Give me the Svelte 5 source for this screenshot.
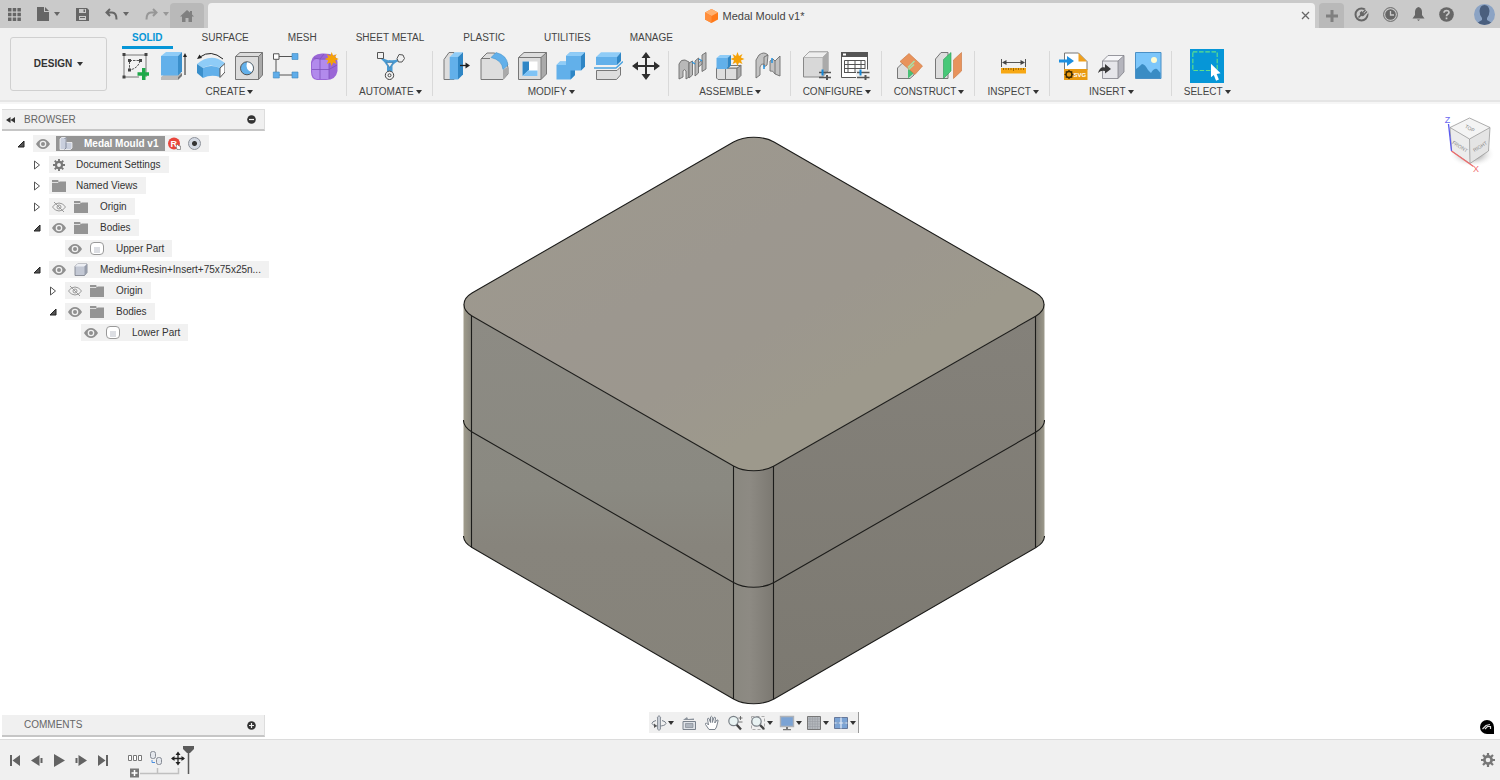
<script lang="ts">
  interface Tool {
    icon: string;
    label: string;
  }

  interface Group {
    name: string;
    tools: Tool[];
  }

  interface Node {
    label: string;
    depth: number;
    icon: string;
    open?: boolean;
    eye?: "on" | "off";
  }

  const star =
    "M0 -7L1.5 -3L5 -5L3.4 -1.6L7 0L3.4 1.6L5 5L1.5 3.4L0 7L-1.5 3.4L-5 5L-3.4 1.6L-7 0L-3.4 -1.6L-5 -5L-1.5 -3Z";

  // ribbon icons, drawn in a 30x30 box
  const art: Record<string, string> = {
    sketch: `<path d="M5 4H27V26M5 4V26H20" fill="none" stroke="#777" stroke-width="1"/><path d="M10.500 9.500H21C20 15 16 18 10.500 19Z" fill="none" stroke="#555" stroke-dasharray="2.500 1"/><g fill="#444"><path d="M3.500 2h3v3h-3zM25.500 2h3v3h-3zM3.500 24.500h3v3h-3zM9 8h3v3H9zM20 8h3v3h-3zM9 17.500h3v3H9z"/></g><path d="M23 17h3.500v4.200H31v3.500h-4.500V29H23v-4.300h-4.500v-3.500H23z" fill="#1fa84a"/>`,
    extrude: `<path d="M4 26L9 22H25L21 26V29H4Z" fill="#bbb"/><path d="M21 26L25 22V25L21 29Z" fill="#777"/><path d="M4 5L9 1H25L21 5Z" fill="#8fccf7"/><path d="M4 5H21V24.500H4Z" fill="#62b0ea"/><path d="M21 5L25 1V20.500L21 24.500Z" fill="#3a8fcb"/><path d="M28 24V4" stroke="#222"/><path d="M26 6L28 2L30 6Z" fill="#222"/>`,
    bend: `<path d="M2 13Q16 1 30 12L25 17Q15 12 8 17Z" fill="#8fccf7"/><path d="M2 13L8 17V27L2 22Z" fill="#3a8fcb"/><path d="M8 17Q16 13 25 17V26Q16 23 8 27Z" fill="#62b0ea"/><path d="M25 17L30 12.500V21L25 26.500Z" fill="#fff" stroke="#555"/><path d="M28 8Q16 -2 5 6" fill="none" stroke="#222"/><path d="M2 8L4.500 3.500L7 7Z" fill="#222"/>`,
    hole: `<path d="M2.500 5.500L7 1.500H29.500V24L25.500 28.500H2.500Z" fill="#dcdcdc"/><path d="M25.500 5.500L29.500 1.500V24L25.500 28.500Z" fill="#aaa"/><path d="M2.500 5.500L7 1.500H29.500V24L25.500 28.500H2.500ZM2.500 5.500H25.500V28.500M25.500 5.500L29.500 1.500" fill="none" stroke="#777"/><circle cx="14" cy="17.300" r="6.500" fill="#62b0ea" stroke="#555"/><path d="M14 11.300A6 6 0 0 1 20 17.300A6 6 0 0 1 18.500 21Q12 19 14 11.300Z" fill="#fff"/>`,
    pattern: `<path d="M8 5.500H21M5 8V21M8 24H21" stroke="#555"/><path d="M2.500 2.800h5.500v5.500H2.500z" fill="#fff" stroke="#555"/><path d="M21 2.500h6v6h-6zM2.300 21h6v6h-6zM21 21h6v6h-6z" fill="#5fadea" stroke="#3c86bd" stroke-width=".6"/>`,
    form: `<path d="M2 11Q3 3 13 2.500Q28 2 28.500 11V20Q27 29 17 29H8Q2 28 2 21Z" fill="#9a66d6"/><path d="M3 12Q5 7 12 8H20V28H8Q3 27 3 20Z" fill="#b28aec"/><path d="M11 8V28M20 8V28M3 18.500H20L28 14M5 7Q12 9 20 8L26 4M11 8L15 3" fill="none" stroke="#7d50bb" stroke-width=".8"/><g transform="translate(22.700 8)"><path d="${star}" fill="#f5a208"/></g>`,
    automate: `<path d="M7 6Q11 10 14.500 9Q19 10 23 8L24 10Q19 12 17.500 15V21H12V15Q10 11 6 8Z" fill="#4a9ad2"/><path d="M11.500 11.500H18L14.700 16.500Z" fill="#f1f1f1" stroke="#2f6f9e" stroke-width=".6"/><path d="M2.500 1.500h6v6h-6z" fill="#f1f1f1" stroke="#555"/><path d="M22 7.500L24 3.500L28 4L29.500 7.500L27 11H23.500Z" fill="#f1f1f1" stroke="#555"/><circle cx="14.500" cy="24.300" r="4.200" fill="#f1f1f1" stroke="#444"/><circle cx="14.500" cy="24.300" r="1.500" fill="#fff" stroke="#444"/>`,
    presspull: `<path d="M3 8.500L8 1.500H13V28.500H3Z" fill="#ddd" stroke="#777"/><path d="M8.700 6L13.500 1.300H22L17 6Z" fill="#8fccf7"/><path d="M8.700 6H17V28.500H8.700Z" fill="#62b0ea"/><path d="M17 6L22 1.300V23.500L17 28.500Z" fill="#2f86c5"/><path d="M19 14.500H26" stroke="#222" stroke-width="1.300"/><path d="M24.500 11.500L29 14.500L24.500 17.500Z" fill="#222"/>`,
    fillet: `<path d="M2 8L8 2H15Q28 4 29 17V23L24 28.500H2Z" fill="#ddd" stroke="#777"/><path d="M24 19L29 15.500V23L24 28.500Z" fill="#aaa"/><path d="M12 6.500L17 1.500Q28 4 29 14L24 18.500Q23 9 12 6.500Z" fill="#62b0ea" stroke="#3a8fcb" stroke-width=".5"/><path d="M2 7.500H11" stroke="#777"/>`,
    shell: `<path d="M1.500 6.500L7 1.500H29.500V23L24 28.500H1.500Z" fill="#ddd"/><path d="M24 6.500L29.500 1.500V23L24 28.500Z" fill="#aaa"/><path d="M1.500 6.500L7 1.500H29.500V23L24 28.500H1.500ZM1.500 6.500H24V28.500M24 6.500L29.500 1.500" fill="none" stroke="#777"/><path d="M5.500 10.500H20.500V25H5.500Z" fill="#fff"/><path d="M5.500 10.500H12V19L5.500 25Z" fill="#2f86c5"/><path d="M5.500 25L11 19.500H20.500V25Z" fill="#7fc3f5"/>`,
    combine: `<path d="M1.500 14L5 10.500H11V5L15 1.300H30V15.500L26 19.500H20V24L15.500 28.500H1.500Z" fill="#62b0ea"/><path d="M26 5L30 1.300V15.500L26 19.500Z" fill="#2f86c5"/><path d="M15.500 19.500H20V24L15.500 28.500Z" fill="#2f86c5"/><path d="M11 5L15 1.300H30L26 5ZM1.500 14L5 10.500H11V14Z" fill="#8fccf7"/>`,
    split: `<path d="M3 6L8 1.300H28L24 6Z" fill="#8fccf7"/><path d="M3 6H24V14H3Z" fill="#62b0ea"/><path d="M24 6L28 1.300V10L24 14Z" fill="#2f86c5"/><path d="M3.500 19.500H24L27.500 16V24L23.500 28.500H3.500Z" fill="#ddd" stroke="#777"/><path d="M1 17H23L30 10.500" fill="none" stroke="#4aa3e0" stroke-width="1.400"/>`,
    move: `<path d="M15 4V26M4 15H26" stroke="#2f2f2f" stroke-width="2"/><path d="M15 1L19.500 7H10.500ZM15 29L19.500 23H10.500ZM1 15L7 10.500V19.500ZM29 15L23 10.500V19.500Z" fill="#2f2f2f"/>`,
    joint: `<g fill="#b9b9b9" stroke="#6d6d6d" stroke-width=".9"><path d="M2 13Q4 8 8 9L12 11V26L9 28V20Q7 17 6 20V26L2 28Z"/><path d="M12 12L15.500 10V24L12 27Z"/><path d="M18 10L21.500 7V22L18 25Z"/><path d="M25 4L29 1.500V18L25 20.500Z"/><path d="M21.500 12L25 9V13L21.500 16Z"/></g><path d="M15 11L18 13M22 8L25 10" stroke="#2f97e0" stroke-width="1.400"/>`,
    component: `<path d="M1.500 17H10.500V28.500H3L1.500 27ZM10.500 17H22V28.500H10.500Z" fill="#ddd" stroke="#777"/><path d="M22 17L26 14V24.500L22 28.500Z" fill="#aaa" stroke="#777"/><path d="M12 17L15 14.500H26L22 17Z" fill="#eee" stroke="#777"/><path d="M1.500 7L5 4H16L13 7Z" fill="#8fccf7"/><path d="M1.500 7H12.500V18H1.500Z" fill="#62b0ea"/><path d="M12.500 7L16 4V14.500L12.500 18Z" fill="#2f86c5"/><g transform="translate(22.500 8)"><path d="${star}" fill="#f5a208"/></g>`,
    asbuilt: `<g fill="#c3c3c3" stroke="#6d6d6d" stroke-width=".9"><path d="M3 9L6 4Q11 0 15 4L14 14L11 16V13Q8 12 7 16V24L3 27Z"/><path d="M15 4L11 6V15" fill="none"/><path d="M17 10L20 8L22 10L27 5V25L22 23Q20 19 17 20Z"/><path d="M22 10V23" fill="none"/></g><path d="M11 14V18M19 7V12" stroke="#2f97e0" stroke-width="1.600"/>`,
    configure: `<path d="M1.500 6.500L7 1H26V20L20.500 26H1.500Z" fill="#d8d8d8" stroke="#888"/><path d="M20.500 6.500L26 1V20L20.500 26Z" fill="#aaa"/><path d="M1.500 6.500L7 1H26L20.500 6.500Z" fill="#eee" stroke="#999" stroke-width=".6"/><path d="M17 21.500H29M17 26.500H29" stroke="#555" stroke-width="1.600"/><path d="M20.500 18.500V24.500" stroke="#1488d8" stroke-width="2"/><path d="M25 24V29" stroke="#555" stroke-width="2"/>`,
    table: `<path d="M1.500 1.500H27.500V26.500H1.500Z" fill="#fff" stroke="#555"/><path d="M1 1H28V6H1Z" fill="#555"/><path d="M3 2.500H6V4.500H3Z" fill="#fff"/><path d="M4.500 9.500H25M4.500 13.500H25M4.500 17.500H25M4.500 21.500H18M4.500 9.500V22M8 9.500V22M15 9.500V22M21 9.500V18M25 9.500V18" stroke="#555" fill="none"/><path d="M16 18.500H30V29H16Z" fill="#f1f1f1"/><path d="M17 21.500H29.500M17 26.500H29.500" stroke="#555" stroke-width="1.600"/><path d="M20.500 18.500V24.500" stroke="#1488d8" stroke-width="2"/><path d="M25.500 24V29" stroke="#555" stroke-width="2"/>`,
    plane: `<path d="M2.500 17L7 12.500H19V24L15 27.500H2.500Z" fill="#ddd" stroke="#777"/><path d="M13 18L18 13V23L13 27.500Z" fill="#48bf76"/><path d="M14 2.500L27.500 15L20 23.500L5 10.500Z" fill="#e8935c" stroke="#c9733d" stroke-width=".6"/><path d="M13 16.500L19.500 10M13.500 18.500L19 13.500" stroke="#a8e0a8" stroke-width="1.600"/>`,
    midplane: `<path d="M2.500 8L8 1.500H15V27.500H2.500Z" fill="#ddd" stroke="#777"/><path d="M10.500 8.500L18 1.500V20L10.500 27.500Z" fill="#48c878" stroke="#279a52" stroke-width=".6"/><path d="M20.500 9L28.500 1.500V20L20.500 27.500Z" fill="#e8935c" stroke="#c9733d" stroke-width=".6"/>`,
    measure: `<path d="M3.500 8V16M27.500 8V16M6 11.500H25" stroke="#555"/><path d="M4 11.500L8.500 9V14ZM27 11.500L22.500 9V14Z" fill="#444"/><path d="M3 17H28V22.500H3Z" fill="#f7a814"/><path d="M5.500 17V19M8 17V19M10.500 17V19M13 17V19M15.500 17V20M18 17V19M20.500 17V19M23 17V19M25.500 17V19" stroke="#8a5a00" stroke-width=".8"/>`,
    svg: `<path d="M6.500 2H20.500L29 10.500V19H6.500Z" fill="#fff" stroke="#777"/><path d="M20.500 2L29 10.500H20.500Z" fill="#f0a01c"/><path d="M6 18H29.500V29H6Z" fill="#e99a12"/><circle cx="11" cy="23.500" r="3" fill="none" stroke="#3d2a00" stroke-width="1.400"/><path d="M11 19V21M11 26V28M6.500 23.500H8.500M13.500 23.500H15.500M7.800 20.300L9 21.500M13 25.500L14.200 26.700M14.200 20.300L13 21.500M7.800 26.700L9 25.500" stroke="#3d2a00" stroke-width="1.200"/><text x="15.500" y="26" font-family="Liberation Sans" font-weight="700" font-size="6" fill="#fff">SVG</text><path d="M1 8.500H9V5L16 10L9 15V11.500H1Z" fill="#1d8fe0"/>`,
    derive: `<path d="M6.500 10L12 4.500H28V21L22 27.500H6.500Z" fill="#e6e6ea"/><path d="M22 10L28 4.500V21L22 27.500Z" fill="#b5b5bd"/><path d="M6.500 10L12 4.500H28L22 10Z" fill="#f7f7f9"/><path d="M6.500 10L12 4.500H28V21L22 27.500H6.500ZM6.500 10H22V27.500M22 10L28 4.500" fill="none" stroke="#808088" stroke-width=".8"/><path d="M2 22Q4 15 9 16.500V13L15 18L9 22.500V20Q5 19 2 22Z" fill="#3a3a3a"/>`,
    picture: `<path d="M1.500 1.500H27V27.500H1.500Z" fill="#7cc6fa" stroke="#4a90c6"/><circle cx="20" cy="9" r="3" fill="#fffbd0"/><path d="M2 18Q5 16 8 13Q11 13 14 19L17 22Q20 17 23 18L26.500 22V27H2Z" fill="#3a8cc4"/>`,
    select: `<path d="M0 0H30V30H0Z" fill="#0696d7"/><path d="M2.500 2.500H24V19H2.500Z" fill="none" stroke="#5fe08a" stroke-dasharray="4 1.500"/><path d="M18.500 13L27 21.500L23.500 22L25.500 27L23 28L21 23L18.500 25Z" fill="#fff"/>`,
  };

  const groups: Group[] = [
    {
      name: "CREATE",
      tools: [
        { icon: "sketch", label: "Create Sketch" },
        { icon: "extrude", label: "Extrude" },
        { icon: "bend", label: "Revolve" },
        { icon: "hole", label: "Hole" },
        { icon: "pattern", label: "Rectangular Pattern" },
        { icon: "form", label: "Create Form" },
      ],
    },
    { name: "AUTOMATE", tools: [{ icon: "automate", label: "Automated Modeling" }] },
    {
      name: "MODIFY",
      tools: [
        { icon: "presspull", label: "Press Pull" },
        { icon: "fillet", label: "Fillet" },
        { icon: "shell", label: "Shell" },
        { icon: "combine", label: "Combine" },
        { icon: "split", label: "Split Body" },
        { icon: "move", label: "Move/Copy" },
      ],
    },
    {
      name: "ASSEMBLE",
      tools: [
        { icon: "joint", label: "Joint" },
        { icon: "component", label: "New Component" },
        { icon: "asbuilt", label: "As-built Joint" },
      ],
    },
    {
      name: "CONFIGURE",
      tools: [
        { icon: "configure", label: "Configure" },
        { icon: "table", label: "Configuration Table" },
      ],
    },
    {
      name: "CONSTRUCT",
      tools: [
        { icon: "plane", label: "Offset Plane" },
        { icon: "midplane", label: "Midplane" },
      ],
    },
    { name: "INSPECT", tools: [{ icon: "measure", label: "Measure" }] },
    {
      name: "INSERT",
      tools: [
        { icon: "svg", label: "Insert SVG" },
        { icon: "derive", label: "Insert Derive" },
        { icon: "picture", label: "Canvas" },
      ],
    },
    { name: "SELECT", tools: [{ icon: "select", label: "Select" }] },
  ];

  const tabs = ["SOLID", "SURFACE", "MESH", "SHEET METAL", "PLASTIC", "UTILITIES", "MANAGE"];
  let activeTab = $state("SOLID");

  const nodes: Node[] = [
    { label: "Document Settings", depth: 1, icon: "gear", open: false },
    { label: "Named Views", depth: 1, icon: "folder", open: false },
    { label: "Origin", depth: 1, icon: "folder", open: false, eye: "off" },
    { label: "Bodies", depth: 1, icon: "folder", open: true, eye: "on" },
    { label: "Upper Part", depth: 2, icon: "body", eye: "on" },
    { label: "Medium+Resin+Insert+75x75x25n...", depth: 1, icon: "part", open: true, eye: "on" },
    { label: "Origin", depth: 2, icon: "folder", open: false, eye: "off" },
    { label: "Bodies", depth: 2, icon: "folder", open: true, eye: "on" },
    { label: "Lower Part", depth: 3, icon: "body", eye: "on" },
  ];

  // 16x16 navigation bar icons
  const nav: Record<string, string> = {
    orbit: `<path d="M5 5.500Q1 6.500 1 8.500Q2 11 8 11Q14 11 15 8.500Q15 6.500 11 5.500" fill="none" stroke="#7a828c"/><path d="M6 3L8 .500L10 3H9.500V14L8 15.500L6.500 14V3Z" fill="#c9ced6" stroke="#7a828c" stroke-width=".8"/><path d="M3 8.500L6 11L3 13Z" fill="#555"/>`,
    look: `<path d="M2 6.500H14.500V14.500H2Z" fill="#dfe3e8" stroke="#7a828c"/><path d="M4.500 8.500H12V12.500H4.500Z" fill="#aeb5be" stroke="#7a828c" stroke-width=".6"/><path d="M2 5L6 2L7 4L13 3.500V5Z" fill="#8b929b"/>`,
    pan: `<path d="M5 14.500L1.500 9.500Q1 8 2.500 8L4.500 10L3.500 4Q4 2.500 5 3.500L6.500 7.500V2Q7.300 .500 8.300 2V7.500L10 2.500Q11 1.500 11.500 3L10.800 8L13 5Q14.300 4.500 14 6L12.500 12L11 14.500Z" fill="#fff" stroke="#7a828c"/>`,
    zoom: `<path d="M9.500 9.500L14 14.500" stroke="#444" stroke-width="2.400"/><circle cx="6.500" cy="6" r="4.700" fill="#e9f3f3" stroke="#7a8087" stroke-width="1.200"/><path d="M13.500 1V5M11.500 3H15.500M11.500 7H15.500" stroke="#555" stroke-width=".8"/>`,
    fit: `<path d="M1.500 1.500H14.500V14.500H1.500Z" fill="none" stroke="#999" stroke-dasharray="3 2" stroke-width=".8"/><path d="M9.500 9.500L14 14" stroke="#444" stroke-width="2.400"/><circle cx="6.500" cy="6.500" r="4.700" fill="#e9f3f3" stroke="#7a8087" stroke-width="1.200"/>`,
    display: `<path d="M1.500 1.500H14.500V11.500H1.500Z" fill="#7ba3d4" stroke="#aeb2b8" stroke-width="1.400"/><path d="M7 12H9V14H7ZM4 14H12V15.200H4Z" fill="#777"/>`,
    grid: `<path d="M1.500 1.500H14.500V14.500H1.500Z" fill="#b4b8bd" stroke="#777"/><path d="M4 2V14M6.500 2V14M9 2V14M11.500 2V14M2 4H14M2 6.500H14M2 9H14M2 11.500H14" stroke="#9a9ea4" stroke-width=".6"/>`,
    views: `<path d="M1.500 2.500H14.500V13.500H1.500Z" fill="#7ba3d4" stroke="#66789a"/><path d="M8 2.500V13.500M1.500 8H14.500" stroke="#e6edf7" stroke-width="1.200"/><path d="M3.500 8H6M10 8H12.500" stroke="#5878a5" stroke-width=".8"/>`,
  };

  const navMain = [
    { icon: "orbit", label: "Orbit", menu: true },
    { icon: "look", label: "Look At", menu: false },
    { icon: "pan", label: "Pan", menu: false },
    { icon: "zoom", label: "Zoom", menu: false },
    { icon: "fit", label: "Fit", menu: true },
  ];
  const navDisplay = [
    { icon: "display", label: "Display Settings", menu: true },
    { icon: "grid", label: "Grid and Snaps", menu: true },
    { icon: "views", label: "Viewports", menu: true },
  ];

  const playback = [
    { label: "Go to start", d: "M3 3H5V14H3ZM13 3V14L5.5 8.500Z" },
    { label: "Step back", d: "M10.500 3V14L2 8.500ZM11.500 6H13.500V11H11.500Z" },
    { label: "Play", d: "M3 2L14 8.500L3 15Z" },
    { label: "Step forward", d: "M5.500 3V14L14 8.500ZM2.500 6H4.500V11H2.500Z" },
    { label: "Go to end", d: "M11 3H13V14H11ZM3 3V14L10.500 8.500Z" },
  ];
</script>

{#snippet eye(state: string)}
  <svg width="14" height="10" viewBox="0 0 14 10" aria-hidden="true">
    {#if state === "on"}
      <path d="M0 5Q3 0 7 0Q11 0 14 5Q11 10 7 10Q3 10 0 5Z" fill="#8f8f8f" />
      <circle cx="7" cy="5" r="3.300" fill="#f1f1f1" />
      <circle cx="7" cy="5" r="2" fill="#8f8f8f" />
    {:else}
      <path d="M.500 5Q3 1 7 1Q11 1 13.500 5Q11 9 7 9Q3 9 .500 5Z" fill="none" stroke="#999" />
      <circle cx="7" cy="5" r="2" fill="none" stroke="#999" />
      <path d="M2 0L12 10" stroke="#999" />
    {/if}
  </svg>
{/snippet}

{#snippet gear(size: number)}
  <svg width={size} height={size} viewBox="0 0 14 14" aria-hidden="true">
    <circle cx="7" cy="7" r="3.600" fill="none" stroke="#777" stroke-width="2.600" />
    <path
      d="M7 0V3M7 11V14M0 7H3M11 7H14M2 2L4 4M10 10L12 12M12 2L10 4M4 10L2 12"
      stroke="#777"
      stroke-width="2.200"
    />
  </svg>
{/snippet}

{#snippet nodeIcon(kind: string)}
  {#if kind === "gear"}
    {@render gear(12)}
  {:else if kind === "folder"}
    <svg width="14" height="12" viewBox="0 0 14 12" aria-hidden="true">
      <path d="M0 0H6L7 1.500H14V12H0Z" fill="#949494" />
      <path d="M0 2.500H6L7.500 1" fill="none" stroke="#f1f1f1" stroke-width=".8" />
    </svg>
  {:else if kind === "body"}
    <svg width="14" height="13" viewBox="0 0 14 13" aria-hidden="true">
      <rect x=".500" y=".500" width="13" height="12" rx="3.500" fill="#fff" stroke="#999" />
      <path d="M4 5H10V11H4Z" fill="#dcdee3" />
    </svg>
  {:else}
    <svg width="14" height="13" viewBox="0 0 14 13" aria-hidden="true">
      <path d="M1 3.500L3.500 1H13V9.500L10.500 12.500H1Z" fill="#c3c8d4" stroke="#777c88" stroke-width=".8" />
      <path d="M1 3.500L3.500 1H13L10.500 3.500Z" fill="#eceef3" />
      <path d="M10.500 3.500L13 1V9.500L10.500 12.500Z" fill="#979dab" />
    </svg>
  {/if}
{/snippet}

{#snippet twisty(open: boolean)}
  <svg width="8" height="10" viewBox="0 0 8 10" aria-hidden="true">
    {#if open}
      <path d="M7 2V8H1Z" fill="#555" stroke="#222" />
    {:else}
      <path d="M1.500 1V9L6.500 5Z" fill="#fff" stroke="#555" />
    {/if}
  </svg>
{/snippet}

{#snippet navButton(item: { icon: string; label: string; menu: boolean })}
  <button type="button" class="nav-button" aria-label={item.label}>
    <svg width="16" height="16" viewBox="0 0 16 16">{@html nav[item.icon]}</svg>
    {#if item.menu}<span class="caret"></span>{/if}
  </button>
{/snippet}

<div class="app">
  <header class="titlebar">
    <div class="quick">
      <button type="button" aria-label="Data panel">
        <svg width="13" height="13" viewBox="0 0 13 13">
          <path
            d="M0 0h3.500v3.500H0zM4.700 0h3.500v3.500H4.700zM9.400 0h3.500v3.500H9.400zM0 4.700h3.500v3.500H0zM4.700 4.700h3.500v3.500H4.700zM9.400 4.700h3.500v3.500H9.400zM0 9.400h3.500v3.500H0zM4.700 9.400h3.500v3.500H4.700zM9.400 9.400h3.500v3.500H9.400z"
          />
        </svg>
      </button>
      <button type="button" aria-label="File">
        <svg width="12" height="14" viewBox="0 0 12 14"><path d="M0 0H7V5H12V14H0ZM8 0L12 4H8Z" /></svg>
        <span class="caret"></span>
      </button>
      <button type="button" aria-label="Save">
        <svg width="13" height="13" viewBox="0 0 13 13">
          <path fill-rule="evenodd" d="M0 0H11L13 2V13H0ZM3 1V5H10V1ZM3 8V12H10V8ZM7.500 1.500H9V4H7.500Z" />
          <path d="M4 9H9V10H4Z" />
        </svg>
      </button>
      <button type="button" aria-label="Undo">
        <svg width="13" height="13" viewBox="0 0 13 13">
          <path d="M5 1L1.500 4.500L5 8M2 4.500H7Q11.500 4.500 11.500 11.500" fill="none" stroke="#666" stroke-width="2" />
        </svg>
        <span class="caret"></span>
      </button>
      <button type="button" class="dim" aria-label="Redo">
        <svg width="13" height="13" viewBox="0 0 13 13">
          <path d="M8 1L11.500 4.500L8 8M11 4.500H6Q1.500 4.500 1.500 11.500" fill="none" stroke="#666" stroke-width="2" />
        </svg>
        <span class="caret"></span>
      </button>
    </div>
    <button type="button" class="side-tab home" aria-label="Home">
      <svg width="14" height="12" viewBox="0 0 14 12">
        <path d="M7 0L10 2.500V1H12V4.500L14 6.500H12V12H8.500V8H5.500V12H2V6.500H0Z" fill="#808080" />
      </svg>
    </button>
    <div class="doc-tab">
      <div class="doc-title">
        <svg width="13" height="14" viewBox="0 0 13 14" aria-hidden="true">
          <path d="M6.500 0L13 3.500V10.500L6.500 14L0 10.500V3.500Z" fill="#ff7a1a" />
          <path d="M6.500 0L13 3.500L6.500 7L0 3.500Z" fill="#ffb070" />
          <path d="M0 3.500L6.500 7V14L0 10.500Z" fill="#ff8e3c" />
        </svg>
        <span>Medal Mould v1*</span>
      </div>
      <button type="button" class="close" aria-label="Close document">
        <svg width="9" height="9" viewBox="0 0 9 9"><path d="M1 1L8 8M8 1L1 8" stroke="#666" stroke-width="1.300" /></svg>
      </button>
    </div>
    <button type="button" class="side-tab" aria-label="New design">
      <svg width="12" height="12" viewBox="0 0 12 12"><path d="M6 0V12M0 6H12" stroke="#808080" stroke-width="3" /></svg>
    </button>
    <div class="account">
      <button type="button" aria-label="Extensions">
        <svg width="15" height="15" viewBox="0 0 15 15">
          <circle cx="7.500" cy="7.500" r="6" fill="none" stroke="#666" stroke-width="2" />
          <path d="M8.500 7L10 3L15 0V5L12 9Z" fill="#cacaca" />
          <path d="M4.500 10.500L7.500 7.500" stroke="#666" stroke-width="1.600" />
          <path d="M6 5.500L7.500 4L11 7.500L9.500 9Q7.500 9.500 6.500 8.500Q5.500 7.500 6 5.500Z" />
          <path d="M9 5.500L11.500 3M10.500 7L13 4.500" stroke="#666" stroke-width="1.400" />
        </svg>
      </button>
      <button type="button" aria-label="Job status">
        <svg width="15" height="15" viewBox="0 0 15 15">
          <circle cx="7.500" cy="7.500" r="6.900" fill="none" stroke="#666" />
          <circle cx="7.500" cy="7.500" r="5.300" />
          <path d="M7.500 4V8H11" fill="none" stroke="#cacaca" stroke-width="1.300" />
        </svg>
      </button>
      <button type="button" aria-label="Notifications">
        <svg width="13" height="14" viewBox="0 0 13 14">
          <path d="M6.500 0Q10 1 10 5V8L12.500 11.500H.500L3 8V5Q3 1 6.500 0ZM5 12.500H8L6.500 14Z" />
        </svg>
      </button>
      <button type="button" aria-label="Help">
        <svg width="15" height="15" viewBox="0 0 15 15">
          <circle cx="7.500" cy="7.500" r="7.300" />
          <path d="M5 5.800Q5.200 3.500 7.500 3.500Q10 3.600 10 5.600Q10 6.800 8.500 7.500Q7.500 8 7.500 9.300M7.500 10.500V12.300" fill="none" stroke="#cacaca" stroke-width="1.700" />
        </svg>
      </button>
      <button type="button" class="avatar" aria-label="Profile">
        <svg width="21" height="21" viewBox="0 0 21 21">
          <defs><clipPath id="face"><circle cx="10.500" cy="10.500" r="10.500" /></clipPath></defs>
          <g clip-path="url(#face)">
            <path d="M0 0H21V21H0Z" fill="#8ba3c4" />
            <path d="M5.500 7Q6 1 10.500 1Q15 1 15.500 7Q15.500 11 13 14V16L18 19V21H3V19L8 16V14Q5.500 11 5.500 7Z" fill="#4a5f7e" />
          </g>
        </svg>
      </button>
    </div>
  </header>

  <section class="ribbon">
    <button type="button" class="workspace-switch">DESIGN <span class="caret"></span></button>
    <div class="ribbon-main">
      <nav class="tabs">
        {#each tabs as tab}
          <button type="button" class:active={tab === activeTab} onclick={() => (activeTab = tab)}>{tab}</button>
        {/each}
      </nav>
      <div class="groups">
        {#each groups as group}
          <div class="group">
            <div class="tools">
              {#each group.tools as tool}
                <button type="button" class="tool" class:picked={tool.icon === "select"} aria-label={tool.label}>
                  <svg viewBox="0 0 30 30">{@html art[tool.icon]}</svg>
                </button>
              {/each}
            </div>
            <button type="button" class="group-name">{group.name}<span class="caret"></span></button>
          </div>
        {/each}
      </div>
    </div>
  </section>

  <main class="workspace">
    <div class="stage">
      <svg class="model" width="582" height="569" viewBox="0 0 582 569" role="img" aria-label="Medal mould model">
        <defs>
          <linearGradient id="top" x1="0" y1="0" x2="1" y2="1">
            <stop offset="0" stop-color="#9e9a8d" />
            <stop offset=".4" stop-color="#9c978f" />
            <stop offset=".55" stop-color="#9c978e" />
            <stop offset=".7" stop-color="#9d998c" />
          </linearGradient>
          <linearGradient id="left" x1="0" y1="0" x2="0" y2="1">
            <stop offset="0" stop-color="#8d8b84" />
            <stop offset=".45" stop-color="#8a8981" />
            <stop offset=".6" stop-color="#87847c" />
            <stop offset="1" stop-color="#86837a" />
          </linearGradient>
          <linearGradient id="right" x1="0" y1="0" x2="0" y2="1">
            <stop offset="0" stop-color="#84817a" />
            <stop offset="1" stop-color="#7c7971" />
          </linearGradient>
          <linearGradient id="corner">
            <stop offset="0" stop-color="#8a8880" />
            <stop offset=".4" stop-color="#8d8a83" />
            <stop offset="1" stop-color="#7b7871" />
          </linearGradient>
          <linearGradient id="rim">
            <stop offset="0" stop-color="#a09c8c" />
            <stop offset="1" stop-color="#86847c" />
          </linearGradient>
          <linearGradient id="rim-right">
            <stop offset="0" stop-color="#7d7a72" />
            <stop offset="1" stop-color="#9c998b" />
          </linearGradient>
        </defs>
        <path d="M.500 168V400A28.800 16.600 0 0 0 9 411.500V170Z" fill="url(#rim)" />
        <path d="M581.500 168V400A28.800 16.600 0 0 1 573 411.500V170Z" fill="url(#rim-right)" />
        <path d="M9 180L270.500 330V563L9 411.500Z" fill="url(#left)" />
        <path d="M573 180L311 330V563L573 411.500Z" fill="url(#right)" />
        <path d="M270.500 330H311V563A28.800 16.600 0 0 1 270.500 563Z" fill="url(#corner)" />
        <path
          d="M9 157L270.500 6A28.800 16.600 0 0 1 311 6L573 157A28.800 16.600 0 0 1 573 180L311 330A28.800 16.600 0 0 1 270.500 330L9 180A28.800 16.600 0 0 1 9 157Z"
          fill="url(#top)"
          stroke="#1c1c1a"
          stroke-width="1.100"
        />
        <g fill="none" stroke="#1c1c1a" stroke-width="1.100">
          <path d="M.500 284A28.800 16.600 0 0 0 9 296L270.500 446.500A28.800 16.600 0 0 0 311 446.500L573 296A28.800 16.600 0 0 0 581.500 284" />
          <path d="M.500 400A28.800 16.600 0 0 0 9 411.500L270.500 563A28.800 16.600 0 0 0 311 563L573 411.500A28.800 16.600 0 0 0 581.500 400" />
          <path d="M8.500 180V411.500M270.500 330V563M310.500 330V563M572.500 180V411.500" />
        </g>
      </svg>
    </div>

    <aside class="panels">
      <div class="browser">
        <div class="panel-head">
          <svg width="9" height="6" viewBox="0 0 9 6" aria-hidden="true"><path d="M4.500 0V6L0 3ZM9 0V6L4.500 3Z" fill="#333" /></svg>
          <span>BROWSER</span>
          <button type="button" aria-label="Collapse browser">
            <svg width="9" height="9" viewBox="0 0 9 9"><circle cx="4.500" cy="4.500" r="4.300" fill="#333" /><path d="M2 4.500H7" stroke="#f1f1f1" stroke-width="1.200" /></svg>
          </button>
        </div>
        <ul class="tree">
          <li class="row">
            <span class="twisty">{@render twisty(true)}</span>
            <div class="chip root">
              <span class="slot">{@render eye("on")}</span>
              <span class="selected">
                <svg width="14" height="13" viewBox="0 0 14 13" aria-hidden="true">
                  <path d="M1 2L2.500 .500H7V5.500H13V11L11.500 12.500H1Z" fill="#c9cfdd" stroke="#fff" stroke-width=".7" />
                  <path d="M5.500 2L7 .500V11L5.500 12.500" fill="none" stroke="#72798a" stroke-width=".8" />
                </svg>
                Medal Mould v1
              </span>
              <svg width="13" height="13" viewBox="0 0 13 13" aria-hidden="true">
                <circle cx="6" cy="6.500" r="6" fill="#e8453c" />
                <text x="2.500" y="10" font-size="9" font-weight="700" fill="#fff">R</text>
                <path d="M8 9L9.500 7.500L11 9H12.500V12.500H9Z" fill="#fff" stroke="#777" stroke-width=".7" />
              </svg>
              <input type="radio" name="active" checked aria-label="Activate component" />
            </div>
          </li>
          {#each nodes as node}
            <li class="row" style="padding-left: {node.depth * 16 + 16}px">
              <span class="twisty">
                {#if node.open !== undefined}{@render twisty(node.open)}{/if}
              </span>
              <div class="chip">
                {#if node.eye}<span class="slot">{@render eye(node.eye)}</span>{/if}
                <span class="slot icon">{@render nodeIcon(node.icon)}</span>
                <span class="node-label">{node.label}</span>
              </div>
            </li>
          {/each}
        </ul>
      </div>
      <div class="panel-head comments">
        <span>COMMENTS</span>
        <button type="button" aria-label="Add comment">
          <svg width="9" height="9" viewBox="0 0 9 9"><circle cx="4.500" cy="4.500" r="4.300" fill="#333" /><path d="M2 4.500H7M4.500 2V7" stroke="#f1f1f1" stroke-width="1.200" /></svg>
        </button>
      </div>
    </aside>

    <svg class="cube" width="56" height="64" viewBox="0 0 56 64" role="img" aria-label="View cube">
      <defs>
        <radialGradient id="shade"><stop offset=".4" stop-color="#bbb" /><stop offset="1" stop-color="#fff" stop-opacity="0" /></radialGradient>
      </defs>
      <ellipse cx="32" cy="43" rx="23" ry="13" fill="url(#shade)" />
      <path d="M29.500 7L50 16.500L29.500 28L10 16.500Z" fill="#f4f4f4" />
      <path d="M10 16.500L29.500 28L30 52.500L11.500 40Z" fill="#ececec" />
      <path d="M50 16.500L29.500 28L30 52.500L48.500 40Z" fill="#e4e4e4" />
      <path d="M29.500 7L50 16.500L48.500 40L30 52.500L11.500 40L10 16.500ZM10 16.500L29.500 28L50 16.500M29.500 28L30 52.500" fill="none" stroke="#999" stroke-width=".8" />
      <path d="M8.500 13L11.500 40" stroke="#5a5aee" stroke-width="1.300" />
      <path d="M11.500 40L33.500 55.500" stroke="#ee6a6a" stroke-width="1.300" />
      <g font-family="Liberation Sans" font-size="5" text-anchor="middle" fill="#888">
        <text transform="translate(29 19) rotate(28)">TOP</text>
        <text transform="translate(19 37) rotate(32)">FRONT</text>
        <text transform="translate(41 37) rotate(-32)">RIGHT</text>
      </g>
      <g font-family="Liberation Sans" font-size="9" text-anchor="middle">
        <text x="7.500" y="12" fill="#6a6af0">Z</text>
        <text x="36" y="61" fill="#f07070">X</text>
      </g>
    </svg>

    <div class="navbar">
      <div class="nav-set">
        {#each navMain as item}{@render navButton(item)}{/each}
      </div>
      <div class="nav-set tight">
        {#each navDisplay as item}{@render navButton(item)}{/each}
      </div>
    </div>

    <button type="button" class="assistant" aria-label="Assistant">
      <svg width="14" height="14" viewBox="0 0 14 14">
        <path d="M7 0A7 7 0 0 1 14 7V14H7A7 7 0 0 1 7 0Z" />
        <path d="M2.500 9L6 5.500L10 4.500M5 9L7.500 6.500L10.500 6.500V9" fill="none" stroke="#ddd" stroke-width="1.200" />
      </svg>
    </button>
  </main>

  <footer class="timeline">
    <div class="playback">
      {#each playback as item}
        <button type="button" aria-label={item.label}>
          <svg width="16" height="16" viewBox="0 0 16 16"><path d={item.d} fill="#636363" /></svg>
        </button>
      {/each}
    </div>
    <svg class="history" width="70" height="34" viewBox="0 0 70 34" role="img" aria-label="Design history">
      <path d="M3.500 10.500h3v5h-3zM8.500 10.500h3v5h-3zM13.500 10.500h3v5h-3z" fill="#fff" stroke="#777" />
      <g fill="#e4e7ec" stroke="#868b94">
        <rect x="25.500" y="6.500" width="5" height="7" rx="2" />
        <rect x="31.500" y="12.500" width="5" height="7" rx="2" />
      </g>
      <path d="M27 15V17.500H30" fill="none" stroke="#4a8fe0" />
      <path d="M53 8V19M47 13.500H59" stroke="#222" stroke-width="1.300" />
      <path d="M53 6.500L55.500 10H50.500ZM53 20.500L55.500 17H50.500ZM46 13.500L49.500 11V16ZM60 13.500L56.500 11V16Z" fill="#222" />
      <path d="M15 28.500H53.500V23M32.500 23V28" fill="none" stroke="#c0c0c0" stroke-width="1.500" />
      <path d="M5 23.500H14V32.500H5Z" fill="#777" />
      <path d="M9.500 25V31M6.500 28H12.500" stroke="#fff" stroke-width="1.500" />
      <path d="M58 1H69V4L65 8H62L58 4Z" fill="#5b5b5b" />
      <path d="M63.500 6V29" stroke="#5b5b5b" stroke-width="1.500" />
    </svg>
    <button type="button" class="settings" aria-label="Timeline settings">{@render gear(14)}</button>
  </footer>
</div>

<style>
  :global(body) {
    margin: 0;
  }

  .app {
    min-height: 100vh;
    display: flex;
    flex-direction: column;
    background: #fff;
    color: #444;
    font-family: "Liberation Sans", Arial, sans-serif;
    font-size: 10px;
    line-height: 12px;
  }

  button {
    padding: 0;
    border: none;
    background: transparent;
    color: inherit;
    font: inherit;
    cursor: pointer;
    display: flex;
    align-items: center;
  }
  svg { display: block; flex: none; }

  .caret {
    border: 3px solid transparent;
    border-top: 4px solid #333;
    border-bottom: none;
  }

  /* title bar */
  .titlebar {
    height: 28px;
    display: flex;
    align-items: flex-end;
    background: #cacaca;
    fill: #666;
  }
  .quick {
    width: 162px;
    height: 28px;
    padding-left: 8px;
    display: flex;
    align-items: center;
    gap: 16px;
  }
  .quick button { gap: 5px; }
  .quick .caret { border-top-color: #666; }
  .dim { opacity: 0.5; }
  .side-tab {
    width: 25px;
    height: 25px;
    justify-content: center;
    background: #b9b9b9;
    border-radius: 4px 4px 0 0;
  }
  .home { width: 34px; }
  .doc-tab {
    flex: 1;
    height: 25px;
    margin: 0 4px;
    padding-right: 5px;
    display: flex;
    align-items: center;
    background: #f1f1f1;
    border-radius: 4px 4px 0 0;
  }
  .doc-title {
    flex: 1;
    display: flex;
    align-items: center;
    justify-content: center;
    gap: 5px;
    font-size: 11px;
  }
  .account {
    height: 28px;
    padding: 0 5px 0 10px;
    display: flex;
    align-items: center;
    gap: 14px;
  }
  .avatar { margin-left: 6px; }

  /* ribbon */
  .ribbon {
    display: flex;
    background: #f1f1f1;
    border-bottom: 2px solid #e5e5e5;
    box-shadow: 0 2px 0 #f6f6f6;
  }
  .workspace-switch {
    width: 97px;
    height: 54px;
    margin: 9px 4px 0 10px;
    justify-content: center;
    gap: 5px;
    border: 1px solid #d0d0d0;
    border-radius: 3px;
    color: #333;
    font-weight: 700;
  }
  .ribbon-main { flex: 1; }
  .tabs {
    padding: 3px 0 0 11px;
    display: flex;
    gap: 19px;
  }
  .tabs button {
    padding: 1px 10px 2px;
    border-bottom: 3px solid transparent;
  }
  .tabs .active {
    border-color: #0696d7;
    color: #0696d7;
    font-weight: 700;
  }
  .groups { display: flex; }
  .group {
    margin-bottom: 2px;
    padding: 0 4px;
    display: flex;
    flex-direction: column;
    align-items: center;
    background: linear-gradient(#d9d9d9, #d9d9d9) no-repeat right 0 top 2px / 1px 45px;
  }
  .group:last-child { background: none; }
  .tools { display: flex; height: 34px; }
  .tool {
    width: 38px;
    justify-content: center;
  }
  .tool svg { width: 30px; height: 30px; }
  .picked svg { width: 34px; height: 34px; }
  .group-name {
    padding: 3px 7px 0 8px;
    gap: 2px;
  }

  /* workspace layers share one grid cell */
  .workspace {
    flex: 1;
    display: grid;
    grid-template: 1fr / 1fr;
  }
  .workspace > :global(*) { grid-area: 1 / 1; }
  .stage {
    padding-left: 8px;
    display: flex;
    align-items: center;
    justify-content: center;
  }
  .panels {
    width: 263px;
    padding: 7px 0 2px 2px;
    display: flex;
    flex-direction: column;
    justify-content: space-between;
    z-index: 1;
  }
  .panel-head {
    height: 19px;
    padding: 0 8px 0 4px;
    display: flex;
    align-items: center;
    gap: 9px;
    background: #f0f0f0;
    border: 1px solid #ddd;
    border-bottom: 2px solid #c6c6c6;
    border-left: none;
    color: #666;
  }
  .panel-head button { margin-left: auto; }
  .comments {
    height: 20px;
    padding-left: 22px;
    border-top: none;
  }
  .tree {
    list-style: none;
    margin: 2px 0 0 -2px;
    padding: 0;
  }
  .row {
    height: 21px;
    padding-left: 16px;
    display: flex;
    align-items: center;
  }
  .twisty {
    width: 16px;
    padding-left: 1px;
    flex: none;
    display: flex;
  }
  .chip {
    height: 17px;
    padding-right: 8px;
    flex: none;
    display: flex;
    align-items: center;
    background: #f1f1f1;
    color: #333;
    white-space: nowrap;
  }
  .slot {
    width: 20px;
    flex: none;
    display: flex;
    justify-content: center;
  }
  .slot + .icon { width: 24px; }
  .node-label { padding-left: 7px; }
  .root { gap: 3px; }
  .selected {
    height: 15px;
    padding: 0 7px 0 3px;
    display: flex;
    align-items: center;
    gap: 11px;
    background: #959595;
    color: #fff;
    font-weight: 700;
  }
  input[type="radio"] {
    appearance: none;
    width: 13px;
    height: 13px;
    margin: 0 0 0 4px;
    border: 1px solid #8c919a;
    border-radius: 50%;
    background: radial-gradient(circle, #333 0 2px, #d3d9e3 3px);
  }

  .cube {
    justify-self: end;
    margin: 9px 4px 0 0;
  }
  .navbar {
    align-self: end;
    justify-self: center;
    height: 21px;
    margin: 0 0 6px 8px;
    padding: 0 2px;
    display: flex;
    align-items: center;
    gap: 6px;
    background: #f0f0f0;
    border-right: 1px solid #999;
  }
  .nav-set { display: flex; gap: 7px; }
  .tight { gap: 4px; }
  .nav-button { gap: 1px; }
  .assistant {
    align-self: end;
    justify-self: end;
    margin: 0 6px 5px 0;
  }

  /* timeline */
  .timeline {
    height: 40px;
    padding: 0 5px 0 7px;
    display: flex;
    align-items: center;
    background: #f0f0f0;
    border-top: 1px solid #dcdcdc;
  }
  .playback { display: flex; gap: 6px; }
  .history { margin: 4px 0 0 14px; }
  .settings { margin-left: auto; }
</style>
